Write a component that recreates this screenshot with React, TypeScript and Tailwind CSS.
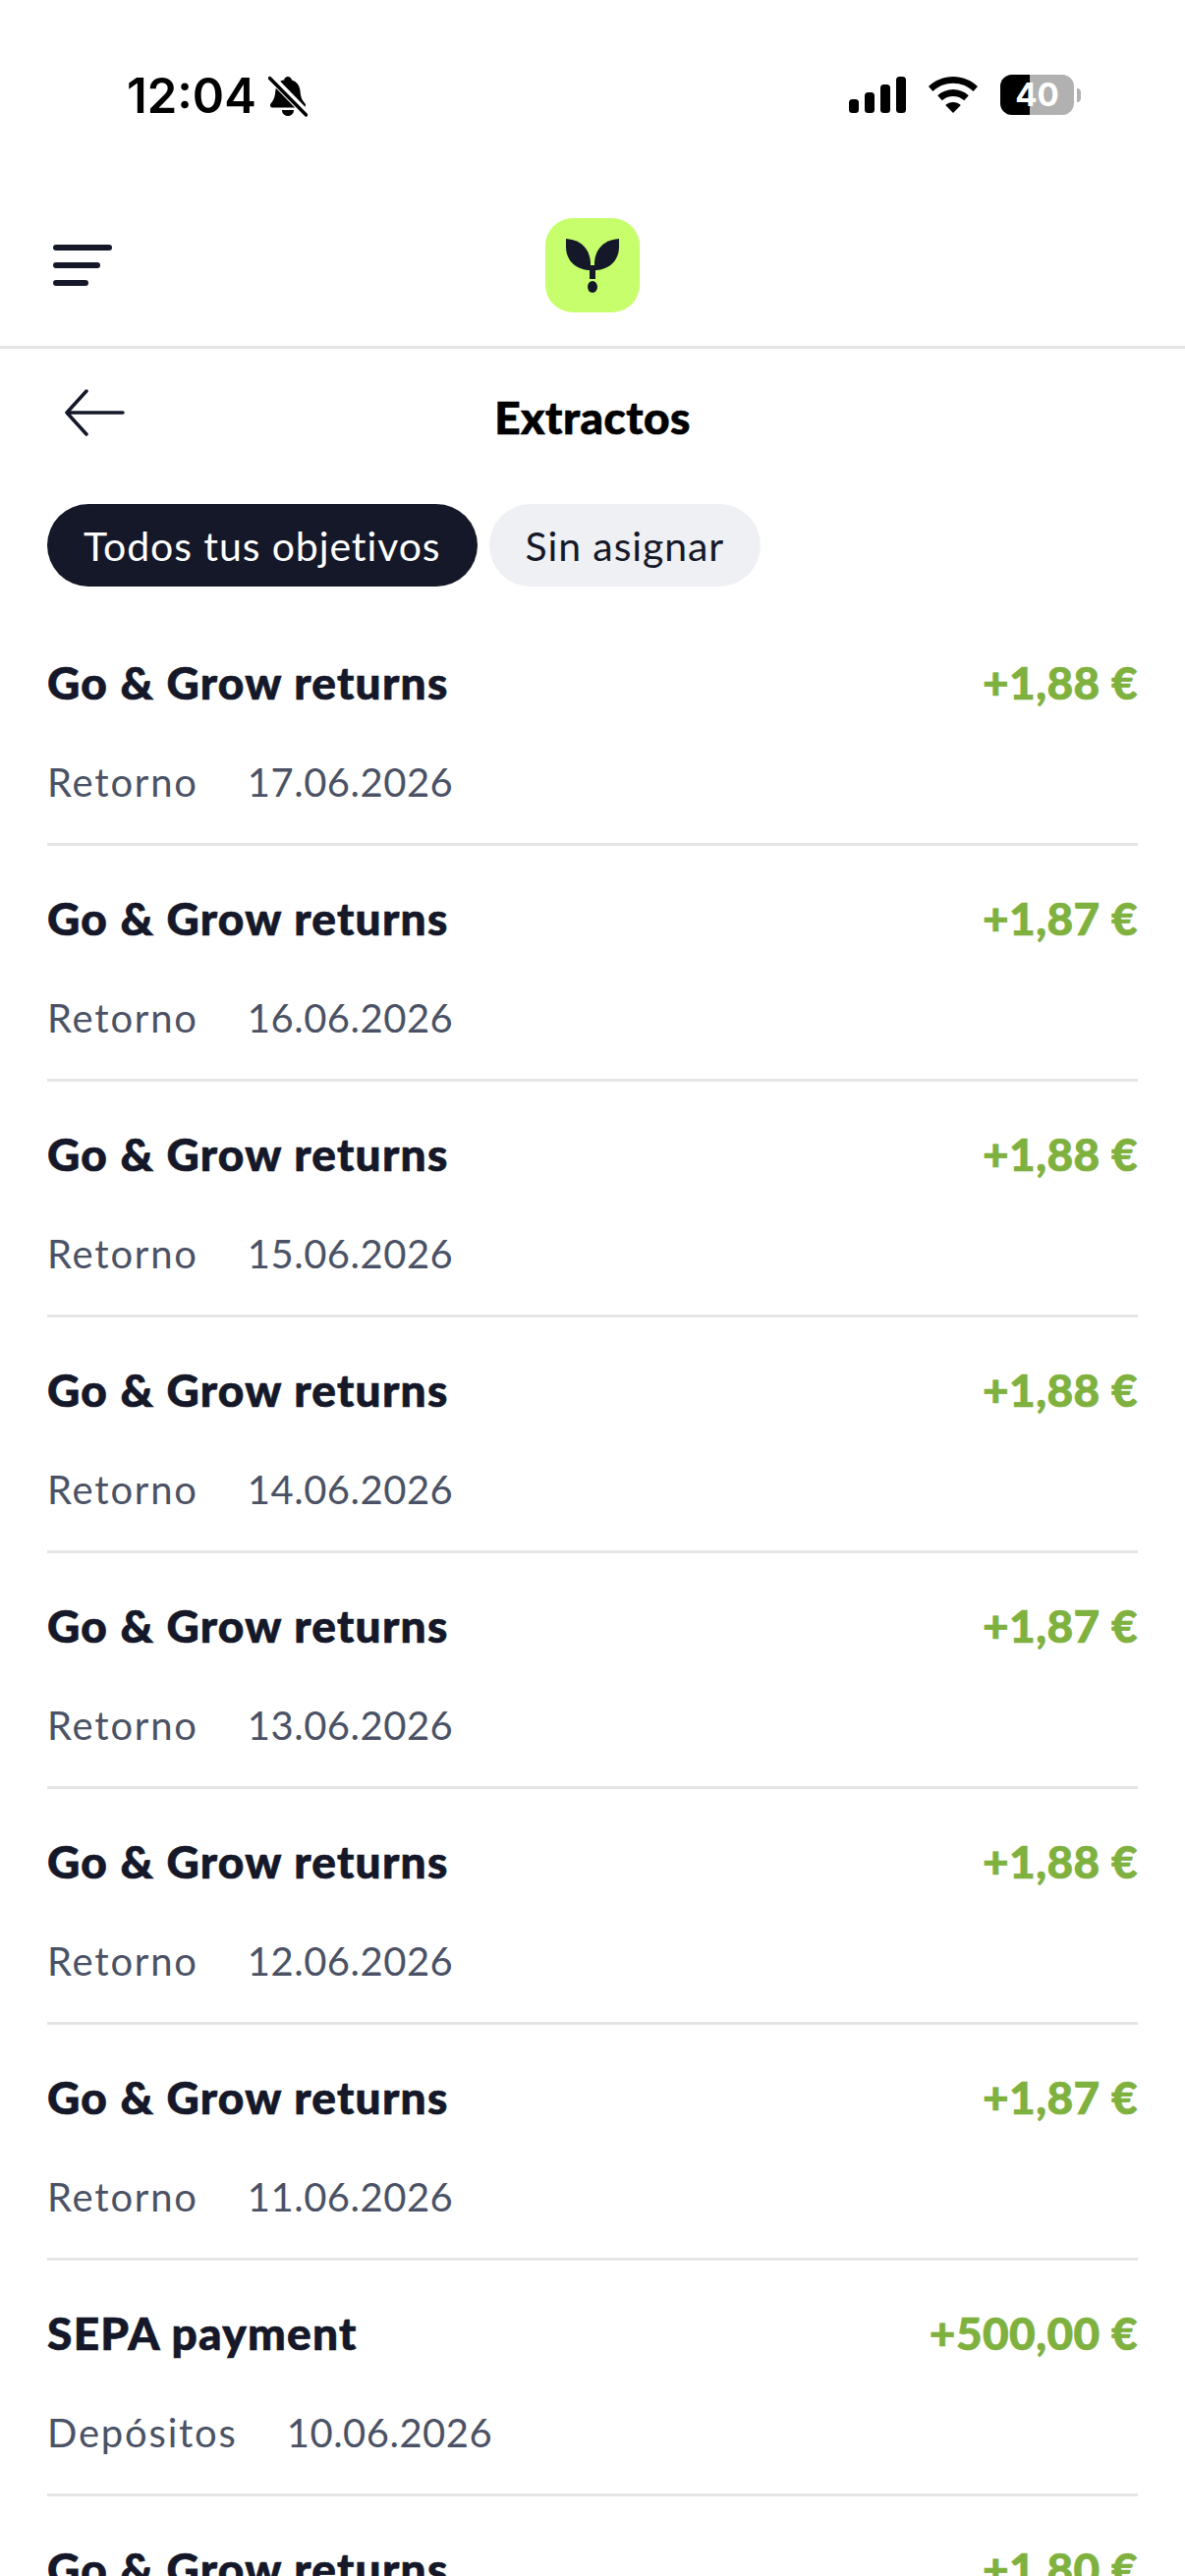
const FONT = "font-['Lato','Liberation_Sans',sans-serif]";

type Row = { title: string; amount: string; kind?: string; date?: string };

const rows: Row[] = [
  { title: "Go & Grow returns", amount: "+1,88 €", kind: "Retorno", date: "17.06.2026" },
  { title: "Go & Grow returns", amount: "+1,87 €", kind: "Retorno", date: "16.06.2026" },
  { title: "Go & Grow returns", amount: "+1,88 €", kind: "Retorno", date: "15.06.2026" },
  { title: "Go & Grow returns", amount: "+1,88 €", kind: "Retorno", date: "14.06.2026" },
  { title: "Go & Grow returns", amount: "+1,87 €", kind: "Retorno", date: "13.06.2026" },
  { title: "Go & Grow returns", amount: "+1,88 €", kind: "Retorno", date: "12.06.2026" },
  { title: "Go & Grow returns", amount: "+1,87 €", kind: "Retorno", date: "11.06.2026" },
  { title: "SEPA payment", amount: "+500,00 €", kind: "Depósitos", date: "10.06.2026" },
  { title: "Go & Grow returns", amount: "+1,80 €" },
];

function BellOff() {
  return (
    <svg width="40" height="44" viewBox="0 0 40 44" className="block">
      <path d="M20 2c2 0 3.500 1.500 4 3.500 5 1.500 8 5.500 8.500 11 .4 5 1 8.500 5 13 1 1.500 .5 4-2 4H4.500c-2.500 0-3.200-2.500-2-4 2.500-3 4-6 4.500-10 .3-3 .5-7 3-10.500C12 6.500 14 5.500 16 5.500 16.500 3.500 18 2 20 2z" fill="#000" />
      <path d="M14 36h12c0 3.500-2.500 6-6 6s-6-2.500-6-6z" fill="#000" />
      <path d="M2 2l37 38" stroke="#fff" strokeWidth="8" />
      <path d="M1.500 3.500L38.500 41" stroke="#000" strokeWidth="3.500" strokeLinecap="round" />
    </svg>
  );
}

function Signal() {
  return (
    <svg width="58" height="37" viewBox="0 0 58 37" className="block">
      <rect x="0" y="23" width="10" height="14" rx="3.500" fill="#000" />
      <rect x="16" y="16" width="10" height="21" rx="3.500" fill="#000" />
      <rect x="32" y="8" width="10" height="29" rx="3.500" fill="#000" />
      <rect x="48" y="0" width="10" height="37" rx="3.500" fill="#000" />
    </svg>
  );
}

function Wifi() {
  return (
    <svg width="50" height="37" viewBox="0 0 50 37" className="block">
      <path d="M25 0c9.500 0 18.500 3.700 25 10l-4.500 5C40 9.700 32.800 6.800 25 6.800S10 9.700 4.500 15L0 10C6.500 3.700 15.500 0 25 0z" fill="#000" />
      <path d="M25 13c6 0 11.500 2.300 15.800 6.200l-4.600 5C33.200 21.500 29.300 20 25 20s-8.200 1.500-11.200 4.200l-4.600-5C13.500 15.300 19 13 25 13z" fill="#000" />
      <path d="M25 26c3 0 5.700 1.100 7.800 3L25 37l-7.800-8c2.100-1.900 4.800-3 7.800-3z" fill="#000" />
    </svg>
  );
}

function Battery() {
  return (
    <div className="relative flex h-[41px] w-[82px] items-center">
      <div className="relative flex h-[41px] w-[75px] items-center justify-center overflow-hidden rounded-[12px] bg-[#b1b1b1]">
        <div className="absolute bottom-0 left-0 top-0 w-[30px] bg-black" />
        <span className="relative font-['Inter',sans-serif] text-[33px] font-bold leading-none text-white">40</span>
      </div>
      <div className="ml-[3px] h-[14px] w-[4px] rounded-r-full bg-[#b1b1b1]" />
    </div>
  );
}

function Logo() {
  return (
    <div className="flex h-[96px] w-[96px] items-center justify-center rounded-[28px] bg-[#c6ff6b]">
      <svg width="56" height="56" viewBox="0 0 56 56" className="block">
        <path d="M1 1c14 1 24 9 25 24v8c-14 0-25-9-25-24z" fill="#151829" />
        <path d="M55 1c-14 1-24 9-25 24v8c14 0 25-9 25-24z" fill="#151829" />
        <rect x="25" y="28" width="6" height="14" fill="#151829" />
        <ellipse cx="28" cy="50" rx="5" ry="6" fill="#151829" />
      </svg>
    </div>
  );
}

function Arrow() {
  return (
    <svg width="62" height="48" viewBox="0 0 62 48" className="block">
      <path d="M60 24H4M23 2L3 24l20 22" fill="none" stroke="#151829" strokeWidth="3.500" strokeLinecap="round" strokeLinejoin="round" />
    </svg>
  );
}

function TxRow({ row }: { row: Row }) {
  return (
    <div className="flex h-[240px] flex-col border-b-[3px] border-[#e5e5e5] pt-[46px]">
      <div className="flex h-[56px] items-center justify-between">
        <span className="text-[46px] font-black leading-none tracking-[1.3px] text-[#151829] [-webkit-text-stroke:0.7px_#151829]">{row.title}</span>
        <span className="text-[46px] font-black leading-none tracking-[0.4px] text-[#7fb13f] [-webkit-text-stroke:0.7px_#7fb13f]">{row.amount}</span>
      </div>
      {row.kind && (
        <div className="mt-[45px] flex h-[56px] items-center gap-[50px] text-[40px] leading-none text-[#4b5265]">
          <span className="tracking-[1.8px]">{row.kind}</span>
          <span className="tracking-[0.5px]">{row.date}</span>
        </div>
      )}
    </div>
  );
}

export default function App() {
  return (
    <div className={`${FONT} h-[2622px] w-[1206px] overflow-hidden bg-white`}>
      <div className="flex h-[222px] items-start justify-between pl-[129px] pr-[106px] pt-[76px]">
        <div className="flex items-center gap-[12px]">
          <span className="font-['Inter',sans-serif] text-[49px] font-semibold leading-[42px] text-black">12:04</span>
          <BellOff />
        </div>
        <div className="flex items-center gap-[23px]">
          <Signal />
          <Wifi />
          <Battery />
        </div>
      </div>

      <div className="relative flex h-[133px] items-start justify-center border-b-[3px] border-[#e5e5e5]">
        <div className="absolute left-[54px] top-[27px] flex flex-col gap-[12px]">
          <div className="h-[6px] w-[60px] rounded-full bg-[#151829]" />
          <div className="h-[6px] w-[48px] rounded-full bg-[#151829]" />
          <div className="h-[6px] w-[36px] rounded-full bg-[#151829]" />
        </div>
        <Logo />
      </div>

      <div className="relative flex h-[158px] items-center justify-center pb-[18px]">
        <div className="absolute left-[65px] top-[41px]">
          <Arrow />
        </div>
        <span className="text-[46px] font-black leading-none tracking-[0.5px] text-black [-webkit-text-stroke:0.7px_#000]">Extractos</span>
      </div>

      <div className="flex gap-[12px] px-[48px] text-[41px] leading-none tracking-[0.9px]">
        <div className="flex h-[84px] items-center rounded-full bg-[#151829] px-[37px] text-white">Todos tus objetivos</div>
        <div className="flex h-[84px] items-center rounded-full bg-[#eef0f3] px-[37px] text-[#151829]">Sin asignar</div>
      </div>

      <div className="mx-[48px] mt-[24px]">
        {rows.map((row, i) => (
          <TxRow key={i} row={row} />
        ))}
      </div>
    </div>
  );
}
